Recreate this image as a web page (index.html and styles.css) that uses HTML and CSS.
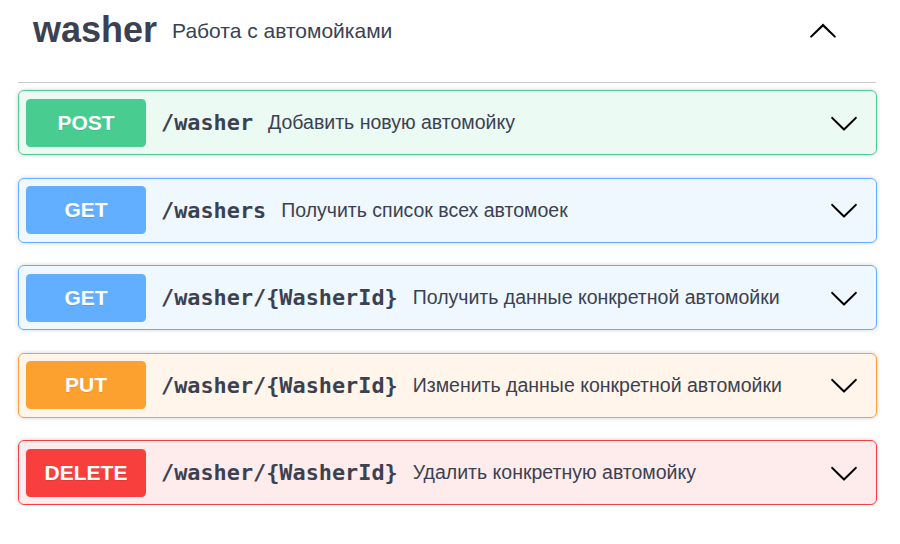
FILE: index.html
```html
<!DOCTYPE html>
<html lang="ru">
<head>
<meta charset="utf-8">
<link rel="stylesheet" href="styles.css">
</head>
<body>
<div class="section">
  <div class="tag">
    <h3 class="tag-name">washer</h3>
    <span class="tag-desc">Работа с автомойками</span>
    <svg class="arrow" viewBox="0 0 20 20" width="30" height="30"><path d="M17.418 6.109c.272-.268.709-.268.979 0s.271.701 0 .969l-7.908 7.83c-.27.268-.707.268-.979 0l-7.908-7.83c-.27-.268-.27-.701 0-.969.271-.268.709-.268.979 0L10 13.25l7.418-7.141z" transform="rotate(180 10 10.5)"/></svg>
  </div>
  <div class="ops">
    <div class="op post">
      <span class="method">POST</span>
      <span class="path">/washer</span>
      <span class="desc">Добавить новую автомойку</span>
      <svg class="arrow" viewBox="0 0 20 20" width="30" height="30"><path d="M17.418 6.109c.272-.268.709-.268.979 0s.271.701 0 .969l-7.908 7.83c-.27.268-.707.268-.979 0l-7.908-7.83c-.27-.268-.27-.701 0-.969.271-.268.709-.268.979 0L10 13.25l7.418-7.141z"/></svg>
    </div>
    <div class="op get">
      <span class="method">GET</span>
      <span class="path">/washers</span>
      <span class="desc">Получить список всех автомоек</span>
      <svg class="arrow" viewBox="0 0 20 20" width="30" height="30"><path d="M17.418 6.109c.272-.268.709-.268.979 0s.271.701 0 .969l-7.908 7.83c-.27.268-.707.268-.979 0l-7.908-7.83c-.27-.268-.27-.701 0-.969.271-.268.709-.268.979 0L10 13.25l7.418-7.141z"/></svg>
    </div>
    <div class="op get">
      <span class="method">GET</span>
      <span class="path">/washer/{WasherId}</span>
      <span class="desc">Получить данные конкретной автомойки</span>
      <svg class="arrow" viewBox="0 0 20 20" width="30" height="30"><path d="M17.418 6.109c.272-.268.709-.268.979 0s.271.701 0 .969l-7.908 7.83c-.27.268-.707.268-.979 0l-7.908-7.83c-.27-.268-.27-.701 0-.969.271-.268.709-.268.979 0L10 13.25l7.418-7.141z"/></svg>
    </div>
    <div class="op put">
      <span class="method">PUT</span>
      <span class="path">/washer/{WasherId}</span>
      <span class="desc">Изменить данные конкретной автомойки</span>
      <svg class="arrow" viewBox="0 0 20 20" width="30" height="30"><path d="M17.418 6.109c.272-.268.709-.268.979 0s.271.701 0 .969l-7.908 7.83c-.27.268-.707.268-.979 0l-7.908-7.83c-.27-.268-.27-.701 0-.969.271-.268.709-.268.979 0L10 13.25l7.418-7.141z"/></svg>
    </div>
    <div class="op delete">
      <span class="method">DELETE</span>
      <span class="path">/washer/{WasherId}</span>
      <span class="desc">Удалить конкретную автомойку</span>
      <svg class="arrow" viewBox="0 0 20 20" width="30" height="30"><path d="M17.418 6.109c.272-.268.709-.268.979 0s.271.701 0 .969l-7.908 7.83c-.27.268-.707.268-.979 0l-7.908-7.83c-.27-.268-.27-.701 0-.969.271-.268.709-.268.979 0L10 13.25l7.418-7.141z"/></svg>
    </div>
  </div>
</div>
</body>
</html>
```
FILE: styles.css
```css
html, body {
  margin: 0;
  padding: 0;
  background: #fff;
}
body {
  font-family: "Liberation Sans", Arial, sans-serif;
  color: #3b4151;
}
.section {
  width: 859px;
  margin-left: 18px;
}
.tag {
  box-sizing: border-box;
  height: 83px;
  display: flex;
  align-items: center;
  padding: 0 38px 23px 15px;
  border-bottom: 1px solid rgba(59, 65, 81, 0.28);
  margin-right: 1px;
}
.tag-name {
  margin: 0;
  font-size: 36px;
  font-weight: 700;
  line-height: 1;
}
.tag-desc {
  flex: 1;
  padding-left: 15px;
  font-size: 21px;
  line-height: 1;
  margin-top: 2px;
}
.arrow {
  display: block;
  flex: none;
  fill: #000;
}
.ops {
  padding-top: 7px;
  display: flex;
  flex-direction: column;
  gap: 22.5px;
}
.op {
  box-sizing: border-box;
  height: 65px;
  display: flex;
  align-items: center;
  padding: 0 17px 0 7px;
  border: 1px solid;
  border-radius: 6px;
  box-shadow: 0 0 4.5px rgba(0, 0, 0, 0.19);
}
.method {
  box-sizing: border-box;
  width: 120px;
  height: 48px;
  border-radius: 4.5px;
  display: flex;
  align-items: center;
  justify-content: center;
  color: #fff;
  font-weight: 700;
  font-size: 21px;
  text-shadow: 0 1px 0 rgba(0, 0, 0, 0.1);
}
.path {
  padding: 0 15px;
  font-family: "DejaVu Sans Mono", monospace;
  font-weight: 700;
  font-size: 21.85px;
  color: #3b4151;
}
.desc {
  flex: 1;
  font-size: 19.5px;
  color: #3b4151;
}
.post { background: rgba(73, 204, 144, 0.1); border-color: #49cc90; }
.post .method { background: #49cc90; }
.get { background: rgba(97, 175, 254, 0.1); border-color: #61affe; }
.get .method { background: #61affe; }
.put { background: rgba(252, 161, 48, 0.1); border-color: #fca130; }
.put .method { background: #fca130; }
.delete { background: rgba(249, 62, 62, 0.1); border-color: #f93e3e; }
.delete .method { background: #f93e3e; }
```
